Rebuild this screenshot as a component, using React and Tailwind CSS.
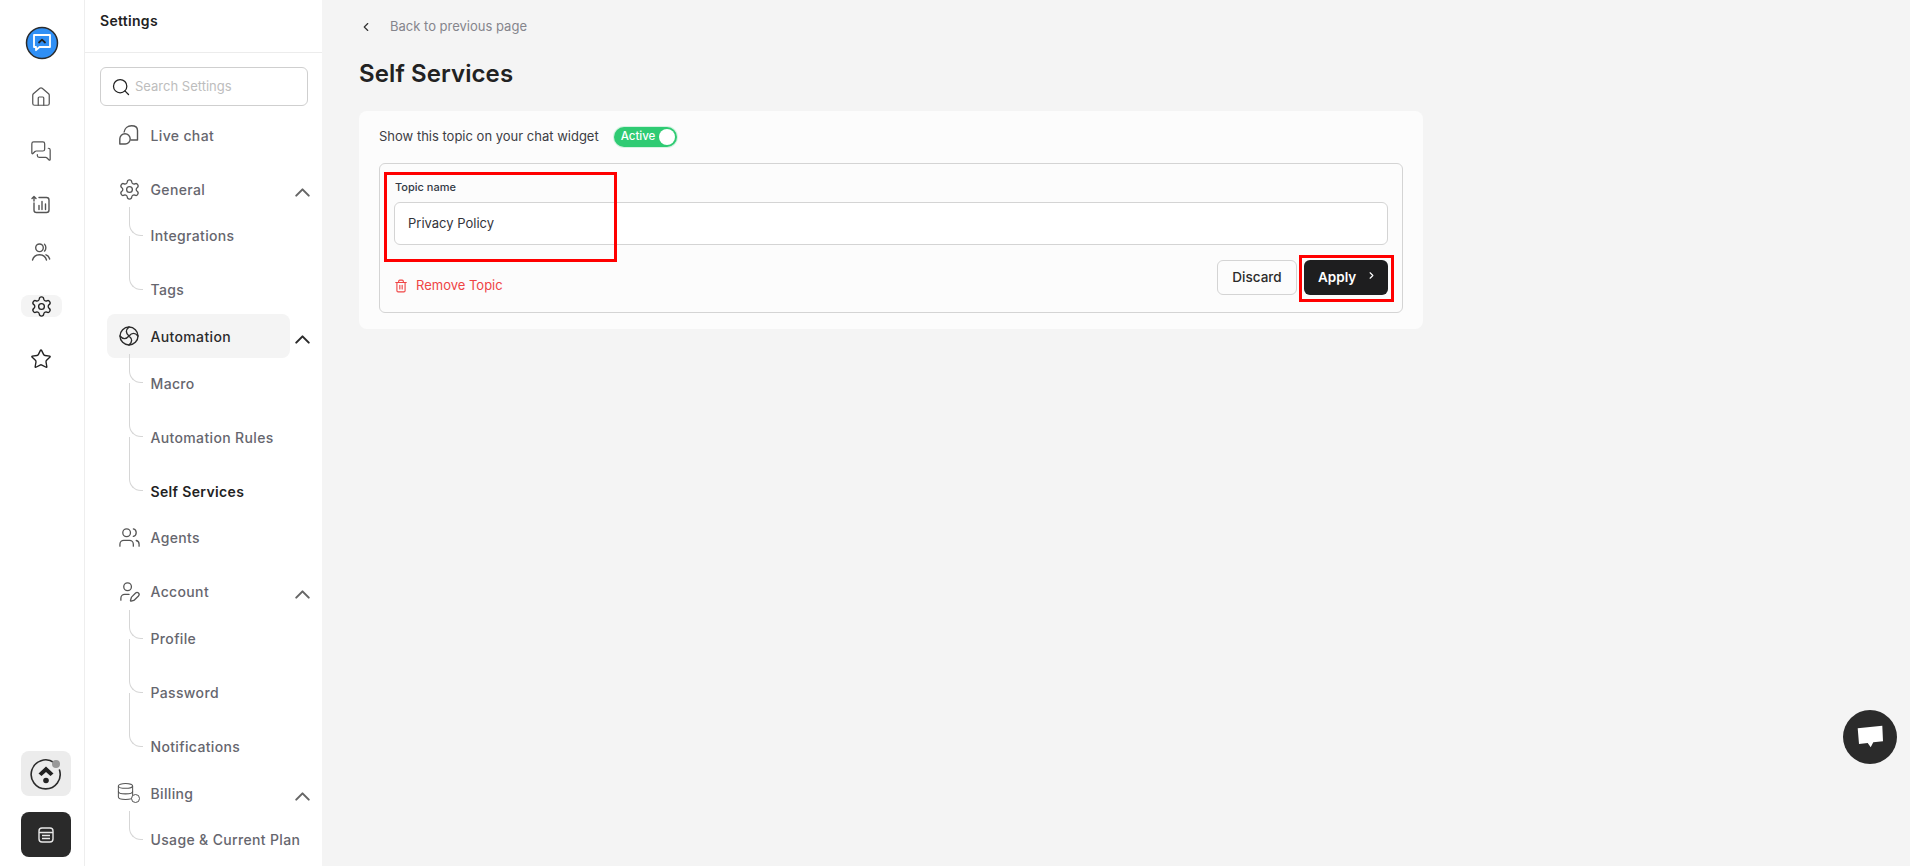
import React from 'react'
import { ChevronLeft, ChevronRight, ChevronUp, Database, House, MessagesSquare, Search, Settings, Star, Trash2, UserPen, Users } from 'lucide-react'

const LogoBubble = () => (
  <svg width="34" height="34" viewBox="0 0 34 34" fill="none">
    <circle cx="17" cy="17" r="15.5" fill="#2f8ff5" stroke="#2b2b2b" strokeWidth="1.5" />
    <path d="M9 9h16v12h-10.500l-3.500 3.200V21H9z" stroke="#fff" strokeWidth="1.800" strokeLinejoin="round" fill="#2f8ff5" />
    <path d="M14 16.500l3-2.800 3 2.800" stroke="#222" strokeWidth="1.800" strokeLinecap="round" strokeLinejoin="round" />
  </svg>
)

const ChartIcon = () => (
  <svg width="20" height="20" viewBox="0 0 20 20" fill="none" stroke="#555" strokeWidth="1.4" strokeLinecap="round" strokeLinejoin="round">
    <path d="M8 2.500h7.500a2.500 2.500 0 0 1 2.500 2.500v10a2.500 2.500 0 0 1-2.500 2.500h-10a2.500 2.500 0 0 1-2.500-2.500V8" />
    <path d="M3 6V1.500M1 3.500l2-2 2 2" />
    <path d="M8 14.500v-4M11 14.500V6.500M14.500 14.500v-5.500" />
  </svg>
)

const RailUsers = () => (
  <svg width="20" height="20" viewBox="0 0 20 20" fill="none" stroke="#555" strokeWidth="1.4" strokeLinecap="round">
    <circle cx="8.500" cy="5.800" r="3.800" />
    <path d="M13.500 2.300c1.800 1.500 1.800 5.300 0 6.800" />
    <path d="M1.500 18c1-3.500 3.700-5.200 7-5.200s6 1.700 7 5.200" />
    <path d="M15 12.800c1.700.5 3 2 3.700 4.200" />
  </svg>
)

const BrandMark = () => (
  <svg width="32" height="32" viewBox="0 0 32 32" fill="none">
    <path d="M24 4.500A14.500 14.500 0 1 0 29.500 12" stroke="#2b2b2b" strokeWidth="1.600" strokeLinecap="round" />
    <path d="M16 8.500l7.500 7-3 2.500L16 14l-4.500 4-3-2.500z" fill="#222" />
    <circle cx="16" cy="22.500" r="2.800" fill="#222" />
  </svg>
)

const PanelIcon = () => (
  <svg width="16" height="16" viewBox="0 0 16 16" fill="none" stroke="#e8e8e8" strokeWidth="1.4">
    <rect x="1" y="1" width="14" height="14" rx="3" />
    <path d="M1 5.500h14M4 8.500h8M4 11.500h8" />
  </svg>
)

const LiveChatIcon = () => (
  <svg width="20" height="20" viewBox="0 0 20 20" fill="none" stroke="#555" strokeWidth="1.4" strokeLinejoin="round">
    <path d="M5 7.500C5.500 3 9 .8 12.500 .8c2.500 0 6 1 6 4.700v9.500h-7" />
    <path d="M.8 19v-5a5.200 5.200 0 1 1 10.400 0 5 5 0 0 1-5 5z" />
  </svg>
)

const FanIcon = () => (
  <svg width="20" height="20" viewBox="0 0 20 20" fill="none" stroke="#2b2b2b" strokeWidth="1.4" strokeLinecap="round">
    <circle cx="10" cy="10" r="9" />
    <path d="M10 1c-3.500 3-3.500 6 0 9M19 10c-3-3.500-6-3.500-9 0M10 19c3.500-3 3.500-6 0-9M1 10c3 3.500 6 3.500 9 0" />
  </svg>
)

const BillingIcon = () => (
  <span className="relative block w-5 h-5">
    <Database size={19} strokeWidth={1.3} className="text-[#555] -ml-[3px] -mt-[1px]" />
    <span className="absolute right-[-1px] bottom-[-1px] w-[9px] h-[9px] rounded-full border border-[#555] bg-white" />
  </span>
)

const navIcon = { size: 23, strokeWidth: 1.35, className: '-m-[1.5px]' }

const navGroups = [
  { label: 'Live chat', icon: <LiveChatIcon /> },
  { label: 'General', icon: <Settings {...navIcon} />, items: ['Integrations', 'Tags'] },
  { label: 'Automation', icon: <FanIcon />, active: true, items: ['Macro', 'Automation Rules', 'Self Services'] },
  { label: 'Agents', icon: <Users {...navIcon} /> },
  { label: 'Account', icon: <UserPen {...navIcon} />, items: ['Profile', 'Password', 'Notifications'] },
  { label: 'Billing', icon: <BillingIcon />, items: ['Usage & Current Plan'] },
]

const NavGroup = ({ group }) => {
  const { label, icon, items, active } = group
  return (
    <div className={items ? '' : 'mb-[10px]'}>
      <div className="flex items-center h-[44px]">
        <div className={`flex items-center w-[183px] h-[44px] pl-3 gap-[11.500px] rounded-lg ${active ? 'bg-[#f4f4f4] text-[#2b2b2b]' : 'text-[#66666e]'}`}>
          <span className="w-5 h-5 shrink-0 text-[#555]">{icon}</span>
          <span className="text-[14px] font-medium tracking-[0.35px]">{label}</span>
        </div>
        {items && <ChevronUp size={25} strokeWidth={2} className={`mt-[6px] ${active ? 'text-[#2b2b2b]' : 'text-[#666]'}`} />}
      </div>
      {items && (
        <ul className="-my-[2.300px]">
          {items.map((item, i) => (
            <li key={item} className="relative h-[54px] flex items-center pl-[43.500px]">
              <span className={`absolute left-[22px] w-[14px] border-l border-b border-[#d6d6d6] rounded-bl-xl ${i === 0 ? 'top-[-2px] h-[29px]' : 'top-[-27px] h-[54px]'}`} />
              <span className={`text-[14px] tracking-[0.35px] ${item === 'Self Services' ? 'font-semibold text-[#222]' : 'font-medium text-[#66666e]'}`}>{item}</span>
            </li>
          ))}
        </ul>
      )}
    </div>
  )
}

const Rail = () => (
  <aside className="w-[84px] shrink-0 h-full bg-white flex flex-col items-center pr-[2px]">
    <div className="mt-[26px] ml-[2px]"><LogoBubble /></div>
    <div className="mt-[26px] flex flex-col items-center gap-[32px] text-[#555]">
      <House size={22} strokeWidth={1.35} />
      <MessagesSquare size={22} strokeWidth={1.35} />
      <div className="mt-[1px]"><ChartIcon /></div>
    </div>
    <div className="mt-[27px]"><RailUsers /></div>
    <div className="mt-[33px] w-[41px] h-[22px] bg-[#f4f4f4] rounded-lg flex items-center justify-center text-[#222]">
      <Settings size={23} strokeWidth={1.4} className="shrink-0" />
    </div>
    <Star size={22} strokeWidth={1.5} className="mt-[31px] text-[#222]" />
    <div className="mt-auto ml-[10px] relative w-[50px] h-[45px] bg-[#ececec] rounded-lg flex items-center justify-center">
      <BrandMark />
      <span className="absolute left-[31px] top-[9px] w-[8px] h-[8px] rounded-full bg-[#999]" />
    </div>
    <div className="mt-[16px] mb-[9px] ml-[10px] w-[50px] h-[45px] bg-[#2a2a2a] rounded-lg flex items-center justify-center">
      <PanelIcon />
    </div>
  </aside>
)

const Sidebar = () => (
  <aside className="w-[238px] shrink-0 h-full bg-white border-l border-[#eeeeee] overflow-hidden">
    <div className="h-[53px] border-b border-[#ececec] pl-[15px] pt-[12px]">
      <h2 className="text-[14px] leading-[18px] font-semibold tracking-[0.3px] text-[#222]">Settings</h2>
    </div>
    <div className="pl-[15px] pt-[14px]">
      <div className="w-[208px] h-[39px] flex items-center gap-[4px] pl-[10px] border border-[#cfcfcf] rounded-md">
        <Search size={20} strokeWidth={1.5} className="text-[#222]" />
        <span className="text-[13px] text-[#bdbdbd]">Search Settings</span>
      </div>
    </div>
    <nav className="pl-[22px] pt-[7px]">
      {navGroups.map((group) => <NavGroup key={group.label} group={group} />)}
    </nav>
  </aside>
)

export default function App() {
  return (
    <div className="h-[866px] w-full flex overflow-hidden bg-[#f4f4f4] font-['Inter',sans-serif]">
      <Rail />
      <Sidebar />
      <main className="flex-1 pl-[37px] pt-[16px]">
        <div className="flex items-center h-[22px] text-[13px] text-[#85858c]">
          <ChevronLeft size={14} strokeWidth={2} className="text-[#333]" />
          <span className="ml-[17px]">Back to previous page</span>
        </div>
        <h1 className="mt-[21px] text-[24px] leading-[30px] font-semibold tracking-[0.1px] text-[#222]">Self Services</h1>
        <section className="mt-[22px] w-[1064px] h-[218px] bg-[#fcfcfc] rounded-lg px-5 pt-4">
          <div className="flex items-center h-[20px]">
            <span className="text-[13px] text-[#3d3d44]">Show this topic on your chat widget</span>
            <div className="ml-[15px] w-[63px] h-[20px] rounded-full bg-[#2fcb73] ring-1 ring-[#d5f3e2] flex items-center justify-between pl-[7px] pr-[2px]">
              <span className="text-[11.500px] font-medium text-white">Active</span>
              <span className="w-[16px] h-[16px] rounded-full bg-white" />
            </div>
          </div>
          <div className="relative mt-[16px] h-[150px] border border-[#d4d4d4] rounded-md px-[14px] pt-[16px]">
            <label className="block text-[11px] leading-[14px] font-medium text-[#333a45] pl-[1px]">Topic name</label>
            <div className="mt-[8px] h-[43px] bg-white border border-[#d4d4d4] rounded-md flex items-center pl-[13px] text-[13px] text-[#33333a]">Privacy Policy</div>
            <div className="flex items-start justify-between mt-[15px]">
              <div className="flex items-center gap-[8px] mt-[16px] text-[#ef4444]">
                <Trash2 size={14} strokeWidth={1.9} />
                <span className="text-[13px]">Remove Topic</span>
              </div>
              <div className="flex gap-[7px]">
                <button className="w-[80px] h-[35px] border border-[#d4d4d4] rounded-md text-[13.500px] font-medium text-[#2b2b2b]">Discard</button>
                <div className="relative">
                  <button className="w-[84px] h-[35px] bg-[#1e1e1f] rounded-md flex items-center pl-[14px] text-[13.500px] font-semibold text-white">
                    Apply
                    <ChevronRight size={11} strokeWidth={2.5} className="ml-[10px] -mt-[4px]" />
                  </button>
                  <span className="absolute -left-[5px] -right-[6px] -top-[5px] -bottom-[7px] border-[3px] border-[#ff0000]" />
                </div>
              </div>
            </div>
            <span className="absolute left-[4px] top-[8px] w-[233px] h-[90px] border-[3px] border-[#ff0000]" />
          </div>
        </section>
      </main>
      <button className="fixed right-[13px] top-[710px] w-[54px] h-[54px] rounded-full bg-[#2b2b2b] flex items-center justify-center">
        <svg width="28" height="24" viewBox="0 0 28 24" fill="#fff">
          <polygon points="1.700,3.300 26.300,0.700 27,16.300 17.300,17.300 14.700,22.300 11.700,18 3,19" />
        </svg>
      </button>
    </div>
  )
}
